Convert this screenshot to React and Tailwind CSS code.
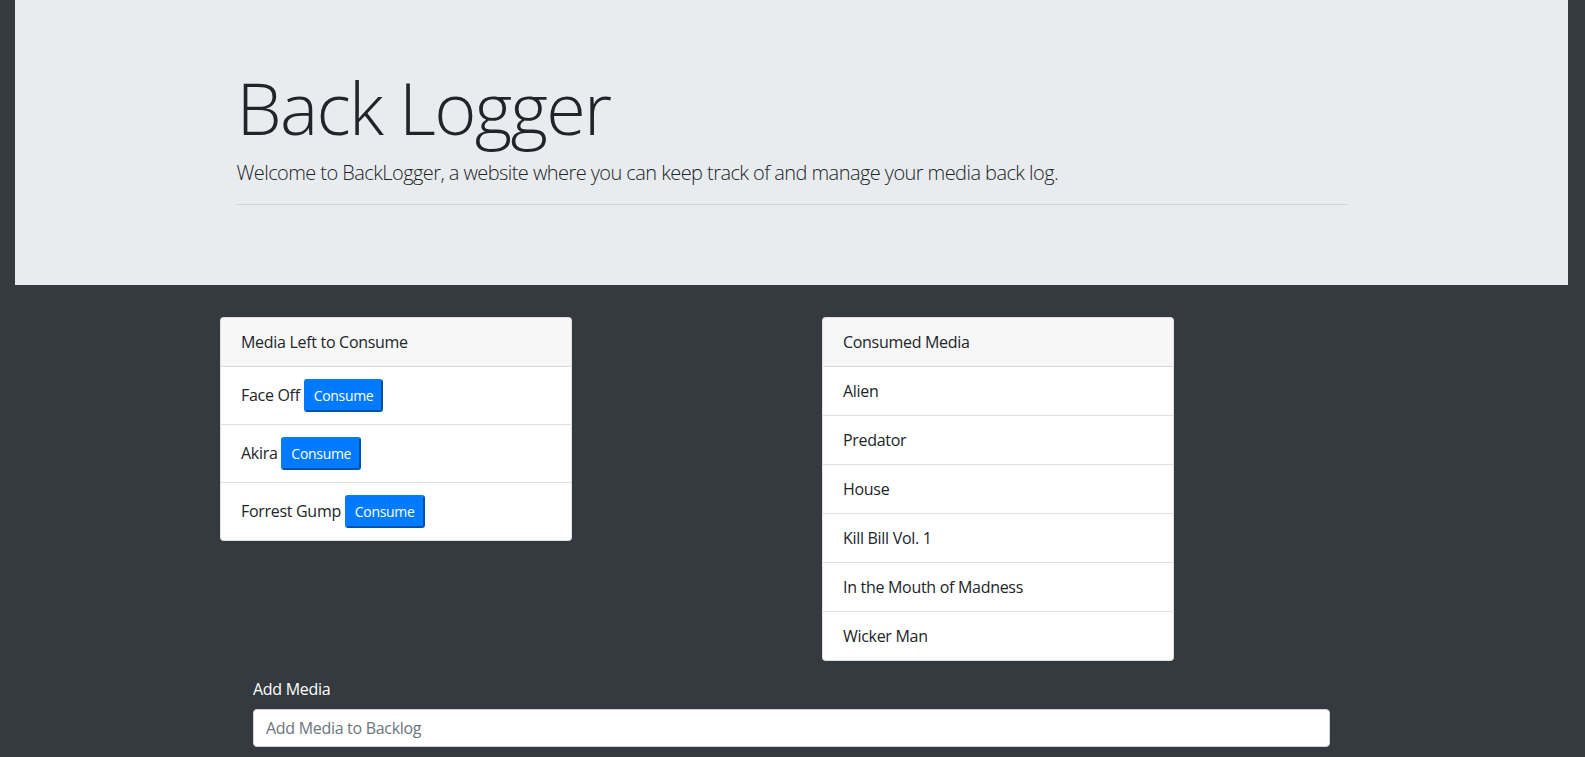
import React from 'react';

const toConsume = ['Face Off', 'Akira', 'Forrest Gump'];
const consumed = ['Alien', 'Predator', 'House', 'Kill Bill Vol. 1', 'In the Mouth of Madness', 'Wicker Man'];

const Card = ({ title, children }) => (
  <div className="w-[352px] overflow-hidden rounded border border-black/[0.125] bg-white">
    <div className="border-b border-black/[0.125] bg-[#f7f7f7] px-5 py-3 leading-6">{title}</div>
    {children}
  </div>
);

export default function App() {
  return (
    <div className="min-h-screen bg-[#343a40] text-base text-[#212529] tracking-[-0.3px] [font-family:'Open_Sans',sans-serif]">
      {/* Jumbotron */}
      <div className="ml-[15px] mr-[17px] bg-[#e9ecef] px-8 py-16">
        <div className="mx-auto w-[1110px]">
          <h1 className="mb-2 text-[72px] font-light leading-[1.2] tracking-[-1.7px]">Back Logger</h1>
          <p className="text-xl font-light leading-[1.5] tracking-[-0.57px]">
            Welcome to BackLogger, a website where you can keep track of and manage your media back log.
          </p>
          <hr className="my-4 border-t border-black/10" />
        </div>
      </div>

      {/* Lists */}
      <div className="mt-8 flex items-start gap-[250px] pl-[220px]">
        <Card title="Media Left to Consume">
          {toConsume.map((m) => (
            <div key={m} className="border-b border-black/[0.125] px-5 py-3 leading-6 last:border-b-0">
              {m}{' '}
              <button className="rounded-[3px] border-2 border-[#007bff] bg-[#007bff] px-2 py-1 text-sm leading-[21px] text-white [border-style:outset]">
                Consume
              </button>
            </div>
          ))}
        </Card>
        <Card title="Consumed Media">
          {consumed.map((m) => (
            <div key={m} className="border-b border-black/[0.125] px-5 py-3 leading-6 last:border-b-0">
              {m}
            </div>
          ))}
        </Card>
      </div>

      {/* Add form */}
      <div className="ml-[253px] mt-4 w-[1077px]">
        <label className="mb-2 block leading-6 text-white">Add Media</label>
        <input
          type="text"
          placeholder="Add Media to Backlog"
          className="block h-[38px] w-full rounded border border-[#ced4da] bg-white px-3 text-base text-[#495057] placeholder:text-[#6c757d]"
        />
      </div>
    </div>
  );
}
